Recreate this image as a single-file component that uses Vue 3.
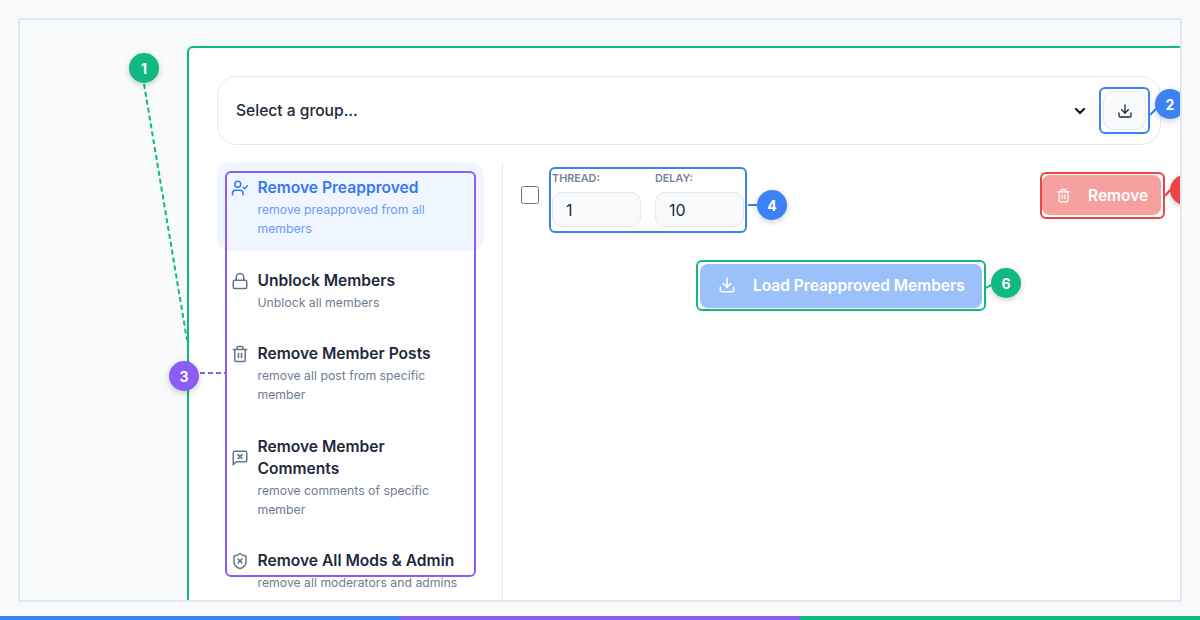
<template>
  <div class="page">
    <div class="frame">
      <div class="card-outline">
        <div class="card">
          <!-- group select -->
          <div class="group-select">
            <span class="group-label">Select a group...</span>
            <svg class="chevron" viewBox="0 0 24 24"><path d="m6 9 6 6 6-6" /></svg>
            <button class="icon-btn">
              <svg class="icon" viewBox="0 0 24 24"><path v-for="d in downloadIcon" :key="d" :d="d" /></svg>
            </button>
          </div>

          <div class="body">
            <!-- tools list -->
            <div class="sidebar">
              <div v-for="tool in tools" :key="tool.title" class="tool" :class="{ active: tool.active }">
                <div class="tool-head">
                  <svg class="icon tool-icon" viewBox="0 0 24 24"><path v-for="d in tool.icon" :key="d" :d="d" /></svg>
                  <span class="tool-title">{{ tool.title }}</span>
                </div>
                <div class="tool-desc">{{ tool.desc }}</div>
              </div>
            </div>

            <div class="main">
              <div class="options">
                <input type="checkbox" class="check" />
                <div class="field">
                  <label>THREAD:</label>
                  <input type="text" value="1" />
                </div>
                <div class="field">
                  <label>DELAY:</label>
                  <input type="text" value="10" />
                </div>
                <button class="remove-btn">
                  <svg class="icon" viewBox="0 0 24 24"><path v-for="d in trashIcon" :key="d" :d="d" /></svg>
                  Remove
                </button>
              </div>
              <div class="load-row">
                <button class="load-btn">
                  <svg class="icon" viewBox="0 0 24 24"><path v-for="d in downloadIcon" :key="d" :d="d" /></svg>
                  Load Preapproved Members
                </button>
              </div>
            </div>
          </div>
        </div>
      </div>

      <!-- annotation layer -->
      <svg class="lines" width="1160" height="580">
        <line x1="124" y1="64" x2="167" y2="320" stroke="#10b981" stroke-dasharray="5 3" />
        <line x1="180" y1="353" x2="206" y2="353" stroke="#8b5cf6" stroke-dasharray="5 3" />
        <line x1="1130" y1="95" x2="1137" y2="88" stroke="#3b82f6" />
        <line x1="728" y1="185" x2="737" y2="185" stroke="#3b82f6" />
        <line x1="966" y1="268" x2="973" y2="264" stroke="#10b981" />
        <line x1="1145" y1="176" x2="1150" y2="170" stroke="#ef4444" />
      </svg>
      <div class="mark mark-2"></div>
      <div class="mark mark-3"></div>
      <div class="mark mark-4"></div>
      <div class="mark mark-5"></div>
      <div class="mark mark-6"></div>
      <span v-for="b in badges" :key="b.n" class="badge" :class="'badge-' + b.n">{{ b.n }}</span>
    </div>
    <div class="stripe">
      <span class="blue"></span>
      <span class="violet"></span>
      <span class="green"></span>
    </div>
  </div>
</template>

<script setup>
const downloadIcon = [
  'M21 15v4a2 2 0 0 1-2 2H5a2 2 0 0 1-2-2v-4',
  'm7 10 5 5 5-5',
  'M12 15V3'
]
const trashIcon = [
  'M3 6h18',
  'M19 6v14a2 2 0 0 1-2 2H7a2 2 0 0 1-2-2V6',
  'M8 6V4a2 2 0 0 1 2-2h4a2 2 0 0 1 2 2v2',
  'M10 11v6',
  'M14 11v6'
]

const tools = [
  {
    title: 'Remove Preapproved',
    desc: 'remove preapproved from all members',
    active: true,
    icon: [
      'M16 21v-2a4 4 0 0 0-4-4H6a4 4 0 0 0-4 4v2',
      'M5 7a4 4 0 1 0 8 0a4 4 0 1 0-8 0',
      'm16 11 2 2 4-4'
    ]
  },
  {
    title: 'Unblock Members',
    desc: 'Unblock all members',
    icon: [
      'M5 11h14a2 2 0 0 1 2 2v7a2 2 0 0 1-2 2H5a2 2 0 0 1-2-2v-7a2 2 0 0 1 2-2z',
      'M7 11V7a5 5 0 0 1 10 0v4'
    ]
  },
  {
    title: 'Remove Member Posts',
    desc: 'remove all post from specific member',
    icon: trashIcon
  },
  {
    title: 'Remove Member Comments',
    desc: 'remove comments of specific member',
    icon: [
      'M21 15a2 2 0 0 1-2 2H7l-4 4V5a2 2 0 0 1 2-2h14a2 2 0 0 1 2 2z',
      'm14.5 7.5-5 5',
      'm9.5 7.5 5 5'
    ]
  },
  {
    title: 'Remove All Mods & Admin',
    desc: 'remove all moderators and admins',
    icon: [
      'M20 13c0 5-3.5 7.5-7.66 8.95a1 1 0 0 1-.67-.01C7.5 20.5 4 18 4 13V6a1 1 0 0 1 1-1c2 0 4.5-1.2 6.24-2.72a1.17 1.17 0 0 1 1.52 0C14.51 3.81 17 5 19 5a1 1 0 0 1 1 1z',
      'm14.5 9.5-5 5',
      'm9.5 9.5 5 5'
    ]
  }
]

const badges = [{ n: 1 }, { n: 2 }, { n: 3 }, { n: 4 }, { n: 5 }, { n: 6 }]
</script>

<style>
html,
body {
  margin: 0;
  background: #f8fafc;
}
</style>

<style scoped>
.page {
  height: 620px;
  display: flex;
  flex-direction: column;
  justify-content: space-between;
  padding-top: 18px;
  box-sizing: border-box;
  background: #f8fafc;
  font-family: Inter, "Liberation Sans", sans-serif;
  color: #1e293b;
  overflow: hidden;
}

.frame {
  position: relative;
  box-sizing: border-box;
  width: 1164px;
  height: 584px;
  margin-left: 18px;
  padding: 26px 0 0 167px;
  border: 2px solid #e2e8f0;
  overflow: hidden;
  background: #f8fafc;
}

.card-outline {
  box-sizing: border-box;
  width: 1004px;
  height: 600px;
  padding: 1px;
  border: 2px solid #10b981;
  border-radius: 6px;
}

.card {
  box-sizing: border-box;
  height: 100%;
  padding: 27px;
  background: #fff;
  border-radius: 12px;
}

.group-select {
  box-sizing: border-box;
  height: 69px;
  display: flex;
  align-items: center;
  padding: 0 14px 0 18px;
  border: 1px solid #e2e8f0;
  border-radius: 20px;
}

.group-label {
  flex: 1;
  font-size: 15.6px;
  font-weight: 500;
}

.chevron {
  width: 16px;
  height: 16px;
  margin-right: 15px;
  fill: none;
  stroke: #0f172a;
  stroke-width: 3.2;
  stroke-linecap: round;
  stroke-linejoin: round;
}

.icon {
  width: 18px;
  height: 18px;
  flex-shrink: 0;
  fill: none;
  stroke: currentColor;
  stroke-width: 2;
  stroke-linecap: round;
  stroke-linejoin: round;
}

.icon-btn {
  width: 43px;
  height: 39px;
  display: flex;
  align-items: center;
  justify-content: center;
  padding: 0;
  border: 1px solid #e2e8f0;
  border-radius: 10px;
  background: #f8fafc;
  color: #1e293b;
}

.icon-btn .icon {
  width: 16px;
  height: 16px;
}

.body {
  display: flex;
  margin-top: 18px;
  height: 600px;
}

.sidebar {
  width: 267px;
  padding-right: 18px;
  border-right: 1px solid #e2e8f0;
  display: flex;
  flex-direction: column;
  gap: 4.5px;
  flex-shrink: 0;
}

.tool {
  padding: 14px 18px 13px 14px;
  border-radius: 12px;
}

.tool.active {
  background: #eff6ff;
}

.tool-head {
  display: flex;
  align-items: center;
  gap: 8.5px;
}

.tool-icon {
  color: #64748b;
}

.tool-title {
  font-size: 15.6px;
  line-height: 22px;
  font-weight: 600;
  color: #1e293b;
}

.tool-desc {
  margin-top: 1px;
  padding-left: 26.5px;
  font-size: 12.25px;
  line-height: 19px;
  color: #6f7d92;
}

.tool.active .tool-icon,
.tool.active .tool-title {
  color: #3b76f3;
}

.tool.active .tool-desc {
  color: #6a9cf8;
}

.main {
  flex: 1;
  padding-left: 18px;
}

.options {
  display: flex;
  align-items: flex-start;
  padding-top: 9px;
}

.check {
  width: 18px;
  height: 18px;
  margin: 14px 13px 0 0;
}

.field {
  display: flex;
  flex-direction: column;
  margin-right: 14px;
}

.field label {
  height: 20px;
  font-size: 10.8px;
  line-height: 13px;
  font-weight: 600;
  color: #76849a;
}

.field input {
  box-sizing: border-box;
  width: 89px;
  height: 35px;
  padding: 0 13px;
  border: 1px solid #e2e8f0;
  border-radius: 10px;
  background: #f8fafc;
  font-family: inherit;
  font-size: 16px;
  color: #1e293b;
}

.remove-btn,
.load-btn {
  display: flex;
  align-items: center;
  border: none;
  border-radius: 8px;
  color: #fff;
  font-family: inherit;
  font-size: 15.5px;
  font-weight: 600;
  white-space: nowrap;
  opacity: 0.5;
}

.remove-btn {
  width: 119px;
  height: 40px;
  margin: 3px 0 0 auto;
  padding: 0 14px;
  gap: 17px;
  background: #ef4444;
}

.remove-btn .icon {
  width: 15px;
  height: 15px;
}

.load-row {
  display: flex;
  justify-content: center;
  margin-top: 37px;
}

.load-btn {
  width: 282px;
  height: 44px;
  padding: 0 18px 2px;
  gap: 17px;
  background: #3b82f6;
}

/* annotations, coordinates are relative to the frame */
.lines {
  position: absolute;
  left: 0;
  top: 0;
  pointer-events: none;
}

.lines line {
  stroke-width: 2;
}

.mark {
  position: absolute;
  box-sizing: border-box;
  border: 2px solid;
  border-radius: 6px;
}

.mark-2 {
  left: 1079px;
  top: 67px;
  width: 51px;
  height: 47px;
  border-color: #3b82f6;
}

.mark-3 {
  left: 205px;
  top: 151px;
  width: 251px;
  height: 406px;
  border-color: #8b5cf6;
}

.mark-4 {
  left: 529px;
  top: 147px;
  width: 198px;
  height: 66px;
  border-color: #3b82f6;
}

.mark-5 {
  left: 1020px;
  top: 152px;
  width: 125px;
  height: 47px;
  border-color: #ef4444;
}

.mark-6 {
  left: 676px;
  top: 240px;
  width: 290px;
  height: 51px;
  border-color: #10b981;
}

.badge {
  position: absolute;
  width: 30px;
  height: 30px;
  display: flex;
  align-items: center;
  justify-content: center;
  border-radius: 50%;
  color: #fff;
  font-size: 14px;
  font-weight: 700;
  box-shadow: 0 2px 6px rgba(0, 0, 0, 0.2);
}

.badge-1 {
  left: 109px;
  top: 33px;
  background: #10b981;
}

.badge-2 {
  left: 1135px;
  top: 69px;
  background: #3b82f6;
}

.badge-3 {
  left: 149px;
  top: 341px;
  background: #8b5cf6;
}

.badge-4 {
  left: 737px;
  top: 170px;
  background: #3b82f6;
}

.badge-5 {
  left: 1150px;
  top: 155px;
  background: #ef4444;
}

.badge-6 {
  left: 971px;
  top: 248px;
  background: #10b981;
}

.stripe {
  height: 4px;
  display: flex;
}

.stripe span {
  flex: 1;
}

.blue {
  background: #3b82f6;
}

.violet {
  background: #8b5cf6;
}

.green {
  background: #10b981;
}
</style>
